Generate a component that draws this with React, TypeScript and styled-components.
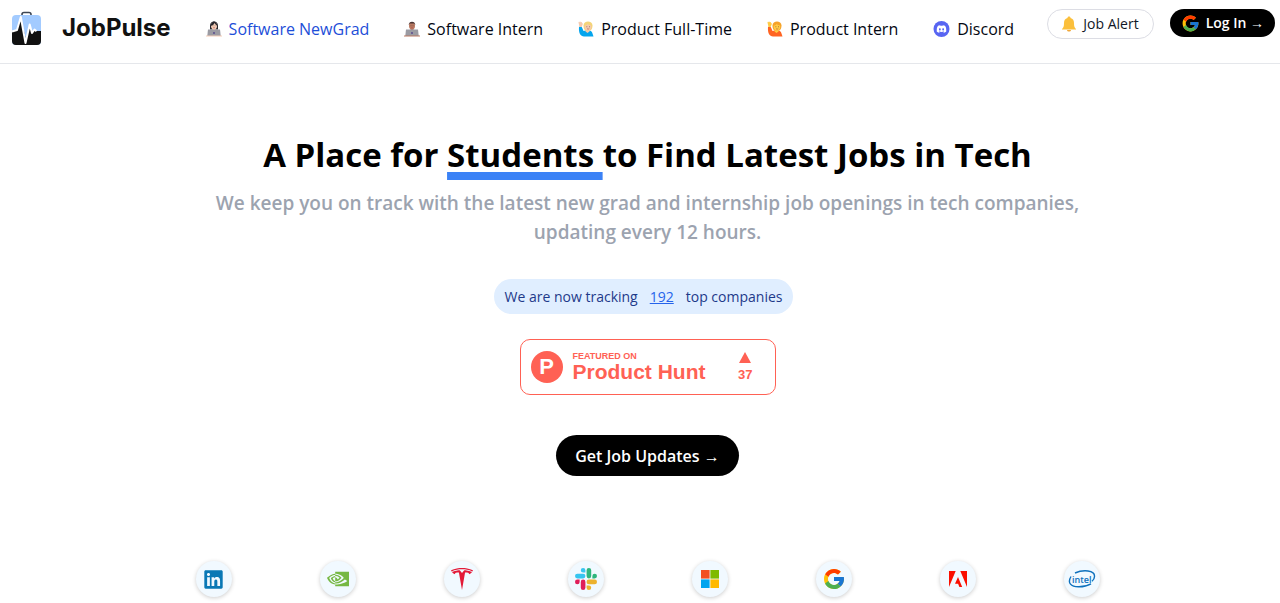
import React from 'react';
import styled, { createGlobalStyle } from 'styled-components';
import { FcGoogle } from 'react-icons/fc';
import { SiNvidia, SiTesla, SiDiscord } from 'react-icons/si';
import { FaLinkedin } from 'react-icons/fa';

const GlobalStyle = createGlobalStyle`
  *, *::before, *::after { box-sizing: border-box; }
  body {
    margin: 0;
    background: #fff;
    color: #000;
    font-family: 'Segoe UI', 'Open Sans', 'Noto Sans', sans-serif;
    overflow-x: hidden;
  }
  h1, p, ul { margin: 0; padding: 0; }
  ul { list-style: none; }
  a { color: inherit; text-decoration: none; }
  button { font: inherit; cursor: pointer; border: 0; }
  svg { display: block; flex: none; }
`;

const Header = styled.header`
  display: flex;
  align-items: flex-start;
  height: 64px;
  padding: 8px 5px 0 11px;
  border-bottom: 1px solid #e5e7eb;
  white-space: nowrap;
`;

const Brand = styled.a`
  display: flex;
  align-items: center;
  gap: 20px;
  height: 40px;
  font: 700 24px/32px Inter, 'Liberation Sans', sans-serif;
  color: #111;
`;

const NavList = styled.ul`
  display: flex;
  gap: 35px;
  margin-left: 35px;
`;

const NavLink = styled.a<{ $active?: boolean }>`
  display: flex;
  align-items: center;
  gap: 7px;
  height: 42px;
  font-size: 16px;
  line-height: 24px;
  font-weight: 500;
  color: ${(p) => (p.$active ? '#1d4ed8' : '#030712')};
`;

const Actions = styled.div`
  display: flex;
  align-items: flex-start;
  gap: 16px;
  margin-left: auto;
  padding-top: 1px;
`;

const PillButton = styled.button<{ $dark?: boolean }>`
  display: flex;
  align-items: center;
  gap: ${(p) => (p.$dark ? '6px' : '7px')};
  height: ${(p) => (p.$dark ? '28px' : '30px')};
  padding: ${(p) => (p.$dark ? '0 11px' : '0 14px')};
  border: ${(p) => (p.$dark ? '0' : '1px solid #dcdde4')};
  border-radius: 15px;
  background: ${(p) => (p.$dark ? '#000' : '#fff')};
  color: ${(p) => (p.$dark ? '#fff' : '#111827')};
  font-size: 14px;
  line-height: 20px;
  font-weight: ${(p) => (p.$dark ? 600 : 500)};
`;

const Hero = styled.main`
  display: flex;
  flex-direction: column;
  align-items: center;
  padding: 68px 0 0 15px;
  text-align: center;
`;

const Title = styled.h1`
  font-size: 33px;
  line-height: 45px;
  font-weight: 700;
`;

const Underlined = styled.span`
  text-decoration: underline;
  text-decoration-color: #3b82f6;
  text-decoration-thickness: 8px;
  text-underline-offset: 5px;
  text-decoration-skip-ink: none;
`;

const Subtitle = styled.p`
  max-width: 896px;
  margin-top: 12px;
  font-size: 19px;
  line-height: 29px;
  font-weight: 600;
  color: #9ca3af;
`;

const Tracking = styled.p`
  display: flex;
  gap: 12px;
  margin: 32px 8px 0 0;
  padding: 8px 11px 7px;
  border-radius: 18px;
  background: #e0eeff;
  color: #1e3a8a;
  font-size: 14px;
  line-height: 20px;
  font-weight: 500;
`;

const CountLink = styled.a`
  color: #2563eb;
  text-decoration: underline;
`;

const HuntBadge = styled.a`
  display: flex;
  align-items: center;
  width: 256px;
  height: 56px;
  margin-top: 25px;
  padding: 0 22px 0 10px;
  border: 1px solid #ff6154;
  border-radius: 10px;
  color: #ff6154;
  font-family: Helvetica, 'Liberation Sans', Arial, sans-serif;
  font-weight: 700;
`;

const HuntMark = styled.span`
  display: grid;
  place-items: center;
  width: 32px;
  height: 32px;
  border-radius: 50%;
  background: #ff6154;
  color: #fff;
  font-size: 22px;
  line-height: 32px;
`;

const HuntText = styled.span`
  display: flex;
  flex-direction: column;
  margin-left: 10px;
  text-align: left;
  font-size: 21px;
  line-height: 22px;
`;

const HuntLabel = styled.small`
  font-size: 9px;
  line-height: 10px;
`;

const Votes = styled.span`
  display: flex;
  flex-direction: column;
  align-items: center;
  gap: 4px;
  margin-left: auto;
  font-size: 13px;
  line-height: 15px;
`;

const CallToAction = styled.button`
  height: 41px;
  margin-top: 40px;
  padding: 0 19px;
  border-radius: 21px;
  background: #000;
  color: #fff;
  font-size: 16px;
  line-height: 24px;
  font-weight: 600;
`;

const Companies = styled.ul`
  display: flex;
  justify-content: space-between;
  width: 100%;
  max-width: 904px;
  margin-top: 85px;
  padding-bottom: 5px;
`;

const CompanyDisc = styled.li`
  display: grid;
  place-items: center;
  width: 36px;
  height: 36px;
  border-radius: 50%;
  background: #f1f9ff;
  box-shadow: 0 1px 4px rgba(0, 0, 0, 0.2);
`;

const BriefcaseLogo = () => (
  <svg width="31" height="35" viewBox="0 0 31 35" aria-hidden="true">
    <path d="M11 5V3.5Q11 1.5 13 1.5h5Q20 1.5 20 3.5V5" fill="none" stroke="#3d4654" strokeWidth="1.6" />
    <rect x="1" y="4" width="29" height="30" rx="4" fill="#a3cbff" />
    <path d="M1 20h4.500L9.500 8l4 14 1.500 7 3.500-16 2.500 8 1.500-1H30v10a4 4 0 0 1-4 4H5a4 4 0 0 1-4-4z" fill="#111" />
    <path d="M1 20.500l5-1.500L9.800 6l4.700 26 4.200-18.500L21 22l2.500-3.500 2 1.700" fill="none" stroke="#fff" strokeWidth="2" strokeLinejoin="round" />
  </svg>
);

const Technologist = ({ skin, hair, long }: { skin: string; hair: string; long?: boolean }) => (
  <svg width="16" height="16" viewBox="0 0 32 32" aria-hidden="true">
    {long && <path d="M8 17V9c0-11 16-11 16 0v8z" fill={hair} />}
    <path d="M4 30c0-9 4-12 12-12s12 3 12 12z" fill={long ? '#505058' : '#70747d'} />
    <path d="M13 14h6v5l-3 3-3-3z" fill={skin} />
    <ellipse cx="16" cy="9.500" rx="6" ry="7.500" fill={skin} />
    <path d={long ? 'M9.500 10C10-2 22-2 22.500 10 20 8 18 6 17 4c-1 3-4 5-7.500 6z' : 'M9.500 8C9-1 23-1 22.500 8l-2-3h-9z'} fill={hair} />
    <path d="M13.500 9.500h1M17.500 9.500h1" stroke="#3b2925" strokeWidth="1.500" />
    <path d="M14 13.500h4" stroke="#b74747" />
    <path d="M4 17h24l1.500 13h-27z" fill="#9b9ba3" />
    <path d="M0 29h32v2H0z" fill={skin} />
    <circle cx="16" cy="24" r="1.800" fill="#56458a" />
  </svg>
);

const RaisingHand = ({ skin, hair, shirt }: { skin: string; hair: string; shirt: string }) => (
  <svg width="16" height="16" viewBox="0 0 32 32" aria-hidden="true">
    <path d="M2 12c2-2 5-1 6 1l3 7c8-3 17-2 18 5l2 6H12C5 31 1 24 2 12z" fill={shirt} />
    <path d="M1 3c0-2 2-2 2 0 0-3 2-3 3 0 1-2 3-1 2 1 2 0 2 2 1 4l-2 4H3z" fill={skin} />
    <path d="M15 17h8v4l-4 3-4-3z" fill={skin} />
    <path d="M11 9c0-11 18-11 18 0 0 5-2 9-4 10H15c-3-2-4-5-4-10z" fill={hair} />
    <ellipse cx="20" cy="11.500" rx="6.500" ry="7.500" fill={skin} />
    <path d="M13 9c1-8 13-8 14 0-4 0-6-2-8-3-1 2-3 3-6 3z" fill={hair} />
    <path d="M17 11.500h1.500M22 11.500h1.500" stroke="#6d432b" strokeWidth="1.500" />
    <path d="M18 15.500q2 1.500 4.500 0" stroke="#9c3f32" fill="none" />
  </svg>
);

const DiscordBadge = () => (
  <svg width="17" height="16" viewBox="0 0 32 32" aria-hidden="true">
    <circle cx="16" cy="16" r="16" fill="#5865f2" />
    <SiDiscord x="6" y="6" size={20} color="#fff" />
  </svg>
);

const Bell = () => (
  <svg width="14" height="16" viewBox="0 0 28 32" aria-hidden="true">
    <path d="M14 1c2 0 3 1 3 3 5 1 7 5 7 10 0 7 1 9 4 12v1H0v-1c3-3 4-5 4-12C4 9 6 5 11 4c0-2 1-3 3-3z" fill="#fbbf3b" />
    <path d="M10 28h8c0 4-8 4-8 0z" fill="#f2a93b" />
  </svg>
);

const SLACK_BAR_V =
  'M5.042 15.165a2.528 2.528 0 0 1-2.520 2.523A2.528 2.528 0 0 1 0 15.165a2.527 2.527 0 0 1 2.522-2.520h2.520zM6.313 15.165a2.527 2.527 0 0 1 2.521-2.520 2.527 2.527 0 0 1 2.521 2.520v6.313A2.528 2.528 0 0 1 8.834 24a2.528 2.528 0 0 1-2.521-2.522z';
const SLACK_BAR_H =
  'M8.834 5.042a2.528 2.528 0 0 1-2.521-2.520A2.528 2.528 0 0 1 8.834 0a2.528 2.528 0 0 1 2.521 2.522v2.520zM8.834 6.313a2.528 2.528 0 0 1 2.521 2.521 2.528 2.528 0 0 1-2.521 2.521H2.522A2.528 2.528 0 0 1 0 8.834a2.528 2.528 0 0 1 2.522-2.521z';

const Slack = () => (
  <svg width="22" height="22" viewBox="0 0 24 24">
    <path d={SLACK_BAR_V} fill="#e01e5a" />
    <path d={SLACK_BAR_H} fill="#36c5f0" />
    <path d={SLACK_BAR_V} fill="#2eb67d" transform="rotate(180 12 12)" />
    <path d={SLACK_BAR_H} fill="#ecb22e" transform="rotate(180 12 12)" />
  </svg>
);

const Microsoft = () => (
  <svg width="18" height="18" viewBox="0 0 18 18">
    <path d="M0 0h8.600v8.600H0z" fill="#f25022" />
    <path d="M9.400 0H18v8.600H9.400z" fill="#7fba00" />
    <path d="M0 9.400h8.600V18H0z" fill="#00a4ef" />
    <path d="M9.400 9.400H18V18H9.400z" fill="#ffb900" />
  </svg>
);

const Adobe = () => (
  <svg width="18" height="16" viewBox="0 0 18 16">
    <path d="M0 0h6.700L0 16zM11.300 0H18v16zM9 5.900L13.200 16h-2.800l-1.300-3.200H6z" fill="#fa0f00" />
  </svg>
);

const Intel = () => (
  <svg width="28" height="20" viewBox="0 0 28 20">
    <path
      d="M3 7.500C-1 14 3 18 11 17.800c5 0 9-1.300 12-3M7 4C15 .5 27 1 26.500 7.500c0 2-1 3.500-2.500 4.700"
      fill="none"
      stroke="#0f71bd"
      strokeWidth="1.400"
    />
    <text x="4" y="13.500" fontFamily="Open Sans, sans-serif" fontWeight="600" fontSize="9" fill="#0f71bd">
      intel
    </text>
  </svg>
);

const navItems = [
  { label: 'Software NewGrad', active: true, icon: <Technologist skin="#f4cdb7" hair="#25252b" long /> },
  { label: 'Software Intern', icon: <Technologist skin="#b97962" hair="#4a3534" /> },
  { label: 'Product Full-Time', icon: <RaisingHand skin="#f4c9ae" hair="#f4d477" shirt="#05a5ed" /> },
  { label: 'Product Intern', icon: <RaisingHand skin="#ffcb45" hair="#f6a229" shirt="#ff6422" /> },
  { label: 'Discord', icon: <DiscordBadge /> },
];

const companies = [
  { name: 'LinkedIn', logo: <FaLinkedin size={21} color="#0a78b5" /> },
  { name: 'NVIDIA', logo: <SiNvidia size={22} color="#76b843" /> },
  { name: 'Tesla', logo: <SiTesla size={22} color="#e31937" /> },
  { name: 'Slack', logo: <Slack /> },
  { name: 'Microsoft', logo: <Microsoft /> },
  { name: 'Google', logo: <FcGoogle size={24} /> },
  { name: 'Adobe', logo: <Adobe /> },
  { name: 'Intel', logo: <Intel /> },
];

export default function App() {
  return (
    <>
      <GlobalStyle />
      <Header>
        <Brand href="#">
          <BriefcaseLogo />
          JobPulse
        </Brand>
        <nav>
          <NavList>
            {navItems.map((item) => (
              <li key={item.label}>
                <NavLink href="#" $active={item.active}>
                  {item.icon}
                  {item.label}
                </NavLink>
              </li>
            ))}
          </NavList>
        </nav>
        <Actions>
          <PillButton type="button">
            <Bell />
            Job Alert
          </PillButton>
          <PillButton type="button" $dark>
            <FcGoogle size={19} />
            Log In →
          </PillButton>
        </Actions>
      </Header>
      <Hero>
        <Title>
          A Place for <Underlined>Students </Underlined>to Find Latest Jobs in Tech
        </Title>
        <Subtitle>
          We keep you on track with the latest new grad and internship job openings in tech companies, updating every
          12 hours.
        </Subtitle>
        <Tracking>
          We are now tracking <CountLink href="#">192</CountLink> top companies
        </Tracking>
        <HuntBadge href="#">
          <HuntMark>P</HuntMark>
          <HuntText>
            <HuntLabel>FEATURED ON</HuntLabel>
            Product Hunt
          </HuntText>
          <Votes>
            <svg width="12" height="11" viewBox="0 0 12 11" aria-hidden="true">
              <path d="M6 0l6 11H0z" fill="#ff6154" />
            </svg>
            37
          </Votes>
        </HuntBadge>
        <CallToAction type="button">Get Job Updates →</CallToAction>
        <Companies>
          {companies.map((company) => (
            <CompanyDisc key={company.name} aria-label={company.name}>
              {company.logo}
            </CompanyDisc>
          ))}
        </Companies>
      </Hero>
    </>
  );
}
